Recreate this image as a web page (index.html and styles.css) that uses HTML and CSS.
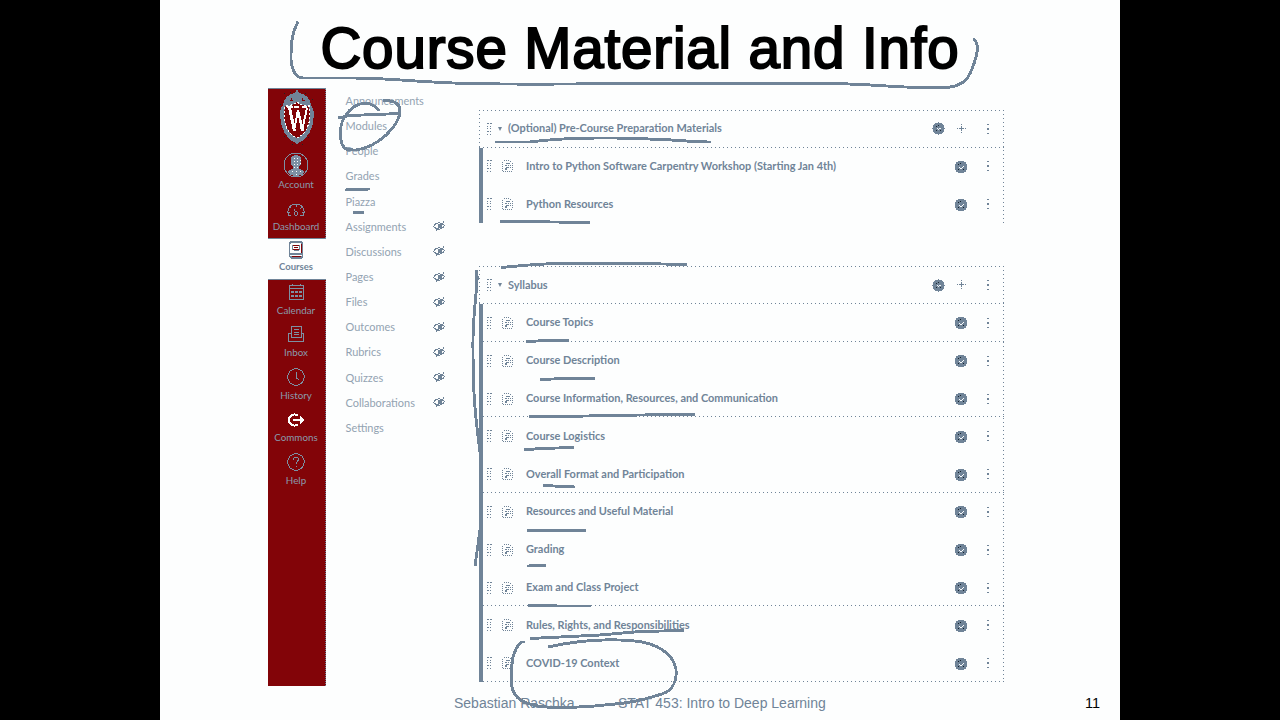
FILE: index.html
```html
<!DOCTYPE html>
<html lang="en">
<head>
<meta charset="utf-8">
<title>Course Material and Info</title>
<link rel="stylesheet" href="styles.css">
</head>
<body>
<svg class="defs" aria-hidden="true">
  <symbol id="grip" viewBox="0 0 6 12"><path d="M0 .5h2M3 .5h2M0 3.500h1M3 3.500h1M0 5.500h1M3 5.500h1M0 8.500h2M3 8.500h1M0 11.500h1M3 11.500h1" stroke="currentColor" fill="none"/></symbol>
  <symbol id="page" viewBox="0 0 12 12"><path d="M2 .5h6M8 1.500h2M10.500 3v8M1 11.500h9M.5 2v9" stroke="currentColor" fill="none" stroke-dasharray="1 1"/><path d="M4 8.500l3.500-4 1 1L5 9zM3.500 3.500h4M2.500 5.500h2M3 9.500h3M8 7.500h1" stroke="currentColor" fill="none" stroke-dasharray="2 .8"/></symbol>
  <symbol id="check" viewBox="0 0 14 14"><circle cx="7" cy="7" r="6.500" fill="currentColor"/><path d="M5 7.500h1M6 8.500h2M8 7.500h1M9 6.500h1" stroke="#fdfefe" fill="none"/><path d="M4 4.500h1M6 3.500h1M9 9.500h1M4 9.500h1" stroke="#14202b"/></symbol>
  <symbol id="dots" viewBox="0 0 3 12"><path d="M.5 1.500h2M.5 6h2M.5 10.500h2" stroke="currentColor" stroke-width="1.600"/></symbol>
  <symbol id="plus" viewBox="0 0 10 10"><path d="M4.500 0v10M0 4.500h10" stroke="currentColor" stroke-dasharray="1 1"/><path d="M4.500 3v4M3 4.500h4" stroke="currentColor"/></symbol>
  <symbol id="eye" viewBox="0 0 12 10"><path d="M.5 5.500C3 1 8 .8 11.300 4.500 9 9 4 9.500 .5 5.500z" stroke="currentColor" fill="none"/><circle cx="7" cy="5" r="2.500" fill="currentColor"/><path d="M2 9.500L10 .5" stroke="#fdfefe" stroke-width=".8"/><path d="M3 9.500L11 .8" stroke="currentColor" stroke-width="1.200"/></symbol>
</svg>
<div class="slide">
  <h1 class="title">Course Material and Info</h1>
  <div class="content">
    <nav class="rail">
      <div class="crest">
        <svg width="38" height="58" viewBox="0 0 38 58">
          <path d="M19 0l2 4c7 1 11 5 12 12 2 2 3 5 3 9 0 14-6 26-17 30C8 51 2 39 2 25c0-4 1-7 3-9C6 9 10 5 17 4z" fill="#708498"/>
          <path d="M19 13c5 4 9 4 12 4 3 15-2 28-12 32C9 45 4 32 7 17c3 0 7 0 12-4z" fill="#820408" stroke="#fdfefe" stroke-width="1.200" stroke-dasharray="2 2"/>
          <path d="M9 18h6M16 18h5M24 18h5M11 19l5 23 4-21 4 21 5-23M12 19l5 23M20 21l5 21" stroke="#fdfefe" stroke-width="2" fill="none"/>
          <path d="M12 11h3M13 9v3M24 11h3M24 9v3" stroke="#820408" fill="none"/>
          <path d="M6 4h1M12 3h1M27 4h1M34 10h1M2 15h1M6 47h1M30 48h1M14 55h1M24 55h1" stroke="#222"/>
        </svg>
      </div>
      <a class="rail-item account"><svg width="26" height="26" viewBox="0 0 26 26"><circle cx="13" cy="13" r="12" fill="none" stroke="currentColor"/><path d="M13 3c4 0 6 3 5.500 7-.5 3-1.500 4-2.500 5v2c3 1 5 1 6 3-4 5.500-14 5.500-18 0 1-2 3-2 6-3v-2c-1-1-2-2-2.500-5C7 6 9 3 13 3z" fill="currentColor"/><path d="M11.500 6v11M14.500 6v11M17.500 8v4M9.500 19v3M13.500 19v4M17.500 19v3" stroke="#fdfefe" stroke-dasharray="1 2"/></svg><span>Account</span></a>
      <a class="rail-item"><svg width="18" height="14" viewBox="0 0 18 14"><path d="M4 12.500H1.500C-.5 6 3 1 9 1s9.500 5 7.500 11.500H13M9 1v2.500M3 4.500l1.500 1M15 4.500l-1.500 1M1 9h2M15 9h2M7 6l1.500 3" stroke="currentColor" fill="none"/><circle cx="9" cy="10.500" r="1.800" fill="none" stroke="currentColor"/></svg><span>Dashboard</span></a>
      <a class="rail-item active"><svg width="16" height="18" viewBox="0 0 16 18"><path d="M3 1h10l1.500 1.500v13L13 17H4l-2.500-2V2.500zM1.500 13h13" stroke="currentColor" stroke-width="1.800" fill="none"/><path d="M5 8.500h7M5 4.500h6M6 6.500h4M4 15.500h9M13.500 3v9" stroke="#820408" fill="none"/><path d="M4.500 4v5M11.500 4v5M6 9.500h5" stroke="currentColor" fill="none"/></svg><span>Courses</span></a>
      <a class="rail-item"><svg width="16" height="18" viewBox="0 0 16 18"><path d="M1 2.500h14v14H1zM1 5.500h14M4 .5v2M12 .5v2" stroke="currentColor" fill="none"/><path d="M3 9h2.500M7 9h2.500M11 9h2.500M3 13h2.500M7 13h2.500M11 13h2.500" stroke="currentColor" stroke-width="2.500"/></svg><span>Calendar</span></a>
      <a class="rail-item"><svg width="18" height="18" viewBox="0 0 18 18"><path d="M4 10V1.500h10V10M1.500 8.500H4V12h10V8.500h2.500v8h-15zM6.500 4.500h5M6.500 7h5M6.500 9.500h5" stroke="currentColor" fill="none"/></svg><span>Inbox</span></a>
      <a class="rail-item"><svg width="18" height="18" viewBox="0 0 18 18"><circle cx="9" cy="9" r="8.300" stroke="currentColor" fill="none"/><path d="M9 4v5.500l3.500 3" stroke="currentColor" fill="none"/></svg><span>History</span></a>
      <a class="rail-item commons"><svg width="18" height="14" viewBox="0 0 18 14"><path d="M11 2.500C6.500 0 2 2.500 2 7s4.500 7 9 4.500" stroke="currentColor" stroke-width="2" fill="none"/><path d="M6 7h8" stroke="currentColor" stroke-width="2"/><path d="M13 3l4.500 4-4.500 4z" fill="currentColor"/></svg><span>Commons</span></a>
      <a class="rail-item"><svg width="18" height="18" viewBox="0 0 18 18"><circle cx="9" cy="9" r="8.300" stroke="currentColor" fill="none"/><path d="M6.500 6.500c0-3.500 5.500-3 5 0C11 8.500 9 8.500 9 11M9 12.500V14" stroke="currentColor" fill="none"/></svg><span>Help</span></a>
    </nav>
    <ul class="menu">
      <li>Announcements</li>
      <li>Modules</li>
      <li>People</li>
      <li>Grades</li>
      <li>Piazza</li>
      <li>Assignments<svg><use href="#eye"/></svg></li>
      <li>Discussions<svg><use href="#eye"/></svg></li>
      <li>Pages<svg><use href="#eye"/></svg></li>
      <li>Files<svg><use href="#eye"/></svg></li>
      <li>Outcomes<svg><use href="#eye"/></svg></li>
      <li>Rubrics<svg><use href="#eye"/></svg></li>
      <li>Quizzes<svg><use href="#eye"/></svg></li>
      <li>Collaborations<svg><use href="#eye"/></svg></li>
      <li>Settings</li>
    </ul>
    <main class="modules">
      <section class="module">
        <header class="row head"><svg class="grip"><use href="#grip"/></svg><i class="caret"></i><b>(Optional) Pre-Course Preparation Materials</b><svg class="check"><use href="#check"/></svg><svg class="plus"><use href="#plus"/></svg><svg class="dots"><use href="#dots"/></svg></header>
        <div class="items">
          <div class="row"><svg class="grip"><use href="#grip"/></svg><svg class="page"><use href="#page"/></svg><b>Intro to Python Software Carpentry Workshop (Starting Jan 4th)</b><svg class="check"><use href="#check"/></svg><svg class="dots"><use href="#dots"/></svg></div>
          <div class="row"><svg class="grip"><use href="#grip"/></svg><svg class="page"><use href="#page"/></svg><b>Python Resources</b><svg class="check"><use href="#check"/></svg><svg class="dots"><use href="#dots"/></svg></div>
        </div>
      </section>
      <section class="module">
        <header class="row head"><svg class="grip"><use href="#grip"/></svg><i class="caret"></i><b>Syllabus</b><svg class="check"><use href="#check"/></svg><svg class="plus"><use href="#plus"/></svg><svg class="dots"><use href="#dots"/></svg></header>
        <div class="items">
          <div class="row ruled"><svg class="grip"><use href="#grip"/></svg><svg class="page"><use href="#page"/></svg><b>Course Topics</b><svg class="check"><use href="#check"/></svg><svg class="dots"><use href="#dots"/></svg></div>
          <div class="row"><svg class="grip"><use href="#grip"/></svg><svg class="page"><use href="#page"/></svg><b>Course Description</b><svg class="check"><use href="#check"/></svg><svg class="dots"><use href="#dots"/></svg></div>
          <div class="row ruled"><svg class="grip"><use href="#grip"/></svg><svg class="page"><use href="#page"/></svg><b>Course Information, Resources, and Communication</b><svg class="check"><use href="#check"/></svg><svg class="dots"><use href="#dots"/></svg></div>
          <div class="row"><svg class="grip"><use href="#grip"/></svg><svg class="page"><use href="#page"/></svg><b>Course Logistics</b><svg class="check"><use href="#check"/></svg><svg class="dots"><use href="#dots"/></svg></div>
          <div class="row ruled"><svg class="grip"><use href="#grip"/></svg><svg class="page"><use href="#page"/></svg><b>Overall Format and Participation</b><svg class="check"><use href="#check"/></svg><svg class="dots"><use href="#dots"/></svg></div>
          <div class="row"><svg class="grip"><use href="#grip"/></svg><svg class="page"><use href="#page"/></svg><b>Resources and Useful Material</b><svg class="check"><use href="#check"/></svg><svg class="dots"><use href="#dots"/></svg></div>
          <div class="row"><svg class="grip"><use href="#grip"/></svg><svg class="page"><use href="#page"/></svg><b>Grading</b><svg class="check"><use href="#check"/></svg><svg class="dots"><use href="#dots"/></svg></div>
          <div class="row ruled"><svg class="grip"><use href="#grip"/></svg><svg class="page"><use href="#page"/></svg><b>Exam and Class Project</b><svg class="check"><use href="#check"/></svg><svg class="dots"><use href="#dots"/></svg></div>
          <div class="row"><svg class="grip"><use href="#grip"/></svg><svg class="page"><use href="#page"/></svg><b>Rules, Rights, and Responsibilities</b><svg class="check"><use href="#check"/></svg><svg class="dots"><use href="#dots"/></svg></div>
          <div class="row ruled"><svg class="grip"><use href="#grip"/></svg><svg class="page"><use href="#page"/></svg><b>COVID-19 Context</b><svg class="check"><use href="#check"/></svg><svg class="dots"><use href="#dots"/></svg></div>
        </div>
      </section>
    </main>
  </div>
  <footer class="footer"><span class="author">Sebastian Raschka</span><span class="course">STAT 453: Intro to Deep Learning</span><span class="num">11</span></footer>
  <svg class="ink" viewBox="160 0 960 720">
    <path d="M298 21.500C291 35 291 45 291 60C292 70 296 78 303 78H350C390 78 400 81 465 83.500C540 85 600 83.500 640 83.500H830C870 84 890 87 920 87.500C945 88 955 89 966 80C972 72 979 52 977 45Q976 40 973 39"/>
    <path d="M379 111C372 100 357 102 349 111C341 120 338 132 342 144C344 150 349 150 356 150C378 147 400 126 400 110C399 102 392 100 383 101M338 118L350 115.500L400 113.500M345 190L370 189M353 212.500H364"/>
    <path d="M495 142H530C560 138 610 137 660 139.500C680 140 690 142 711 142M500 221.500L555 222L590 222.500M501 267.500C520 266 540 263 570 263.500H640L687 264.500"/>
    <path d="M476 270C480 277 472 310 473 350C473 400 476 420 480 452V530L475 566"/>
    <path d="M526 341.500L548 340.500H569M540 379.500L565 378.500H595M529 416.500H560L640 415L695 414.500M524 450L540 448.500L574 447.500M543 485.500L575 487M527 530.500H586M527 566L546 565.500M528 605.500L560 606H591M530 638.500L600 635L640 631.500L684 630.500"/>
    <path d="M525 642H521C510 654 512 668 511.500 680C511 696 520 703 538 706C555 709 590 707 615 704C640 702 651 697 662 694C674 690 677 679 676 669C673 653 656 643 635 641C605 638 575 641 548 647"/>
  </svg>
</div>
</body>
</html>
```

FILE: styles.css
```css
* { box-sizing: border-box; }
body { margin: 0; background: #000; overflow: hidden; font-family: Lato, "Open Sans", sans-serif; color: #708498; }
svg { shape-rendering: crispEdges; flex: none; display: block; }
.defs { display: none; }
.slide { position: relative; width: 960px; height: 720px; margin: 0 auto; background: #fdfefe; display: flex; flex-direction: column; overflow: hidden; }
.title { margin: 0; height: 88px; padding-top: 16px; text-align: center; font: 400 56.500px/66px "Liberation Sans", Arial, sans-serif; letter-spacing: .85px; color: #000; -webkit-text-stroke: 2px #000; white-space: nowrap; }
.content { display: flex; height: 598px; padding-left: 108px; }

.rail { width: 58px; background: #820408; border-top: 1px solid #708498; border-right: 1px dotted #708498; display: flex; flex-direction: column; }
.crest { height: 58px; display: flex; justify-content: center; }
.rail-item { height: 42.600px; display: flex; flex-direction: column; align-items: center; justify-content: flex-end; gap: 3px; padding: 0 1px 6px 0; font-size: 9.800px; line-height: 13px; color: #8a9bac; }
.rail-item svg { color: #7d90a3; }
.rail-item.account { height: 48.500px; gap: 0; padding-bottom: 5px; }
.rail-item.account + .rail-item { padding-bottom: 5px; }
.rail-item.active { height: 42px; background: #fdfefe; border-top: 1px solid #708498; border-bottom: 1px solid #708498; margin-right: -1px; color: #708498; font-weight: 700; font-size: 9.500px; gap: 1px; padding-right: 2px; }
.rail-item.active svg { color: #708498; }
.rail-item.commons { gap: 4px; }
.rail-item.commons svg { color: #fdfefe; }

.menu { list-style: none; margin: 0; padding: 0 0 0 19.500px; width: 153px; }
.menu li { height: 25.150px; display: flex; align-items: center; justify-content: space-between; padding-right: 34.500px; font-size: 10.950px; color: #93a3b2; }
.menu svg { width: 12px; height: 10px; color: #708498; }

.modules { width: 525px; padding-top: 21.500px; display: flex; flex-direction: column; gap: 43px; }
.module { --dots-x: repeating-linear-gradient(90deg, #708498 0 1px, transparent 1px 4px); --dots-y: repeating-linear-gradient(#708498 0 1px, transparent 1px 4px); background: var(--dots-y) right / 1px 100% no-repeat; }
.row { height: 37.800px; display: flex; align-items: center; padding-right: 15px; }
.row b { flex: 1; font-size: 10.950px; font-weight: 700; white-space: nowrap; line-height: 14px; padding-bottom: 1px; }
.head { height: 38px; padding-left: 8px; background: var(--dots-x) top / 100% 1px no-repeat, var(--dots-x) bottom / 100% 1px no-repeat, var(--dots-y) left / 1px 100% no-repeat; }
.items { border-left: 4px solid #708498; }
.items .row { padding-left: 4px; }
.items .ruled { background: var(--dots-x) bottom / 100% 1px no-repeat; }
.items .check { margin-top: 1px; }
.grip { width: 6px; height: 12px; }
.caret { border: 2.500px solid transparent; border-top: 4px solid #708498; border-bottom: 0; margin: 0 6px 0 5px; }
.page { width: 12px; height: 12px; margin: 0 12px 0 9px; }
.check { width: 14px; height: 14px; margin-right: 18px; }
.head .check { width: 13px; height: 13px; margin-right: 12px; }
.plus { width: 10px; height: 10px; margin-right: 19px; }
.dots { width: 3px; height: 12px; }

.footer { flex: 1; display: flex; align-items: center; padding: 0 20px 1px 294px; font: 14px/18px "Liberation Sans", Arial, sans-serif; white-space: nowrap; }
.author { width: 164px; }
.course { flex: 1; }
.num { color: #000; font-size: 14.500px; }
.ink { position: absolute; inset: 0; width: 960px; height: 720px; fill: none; stroke: #708498; stroke-width: 2.900; stroke-linecap: butt; stroke-linejoin: round; pointer-events: none; }
```
